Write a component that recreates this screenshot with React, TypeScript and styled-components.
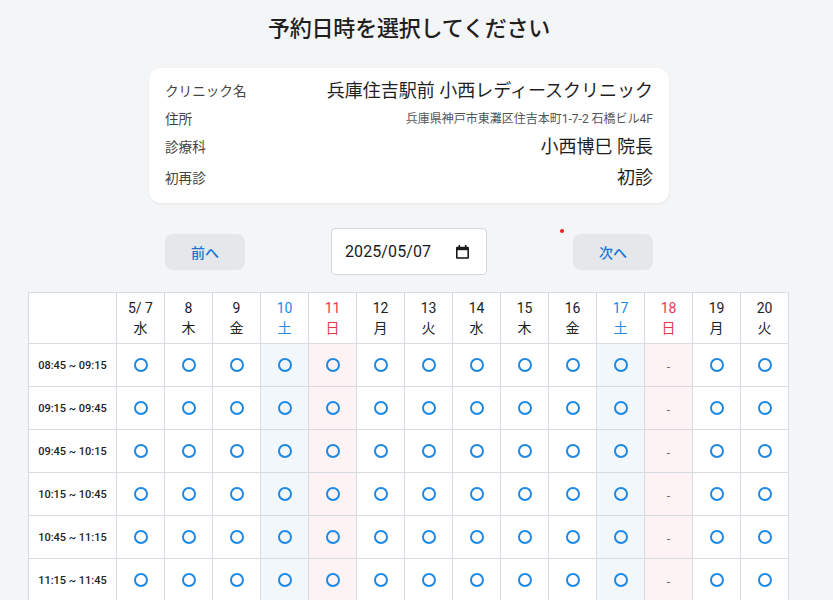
import React from "react";
import styled, { createGlobalStyle, css } from "styled-components";

const GlobalStyle = createGlobalStyle`
  html, body { margin: 0; padding: 0; background: #f4f5f7; }
  body {
    font-family: Roboto, "Noto Sans CJK JP", sans-serif;
    color: #222;
  }
  * { box-sizing: border-box; }
`;

const Page = styled.div`
  width: 818px;
  padding-top: 13px;
  display: flex;
  flex-direction: column;
  align-items: center;
`;

const Title = styled.h1`
  margin: 0;
  font-size: 22px;
  line-height: 32px;
  font-weight: 500;
  color: #1f1f1f;
  letter-spacing: -0.2px;
`;

const Card = styled.div`
  margin-top: 23px;
  width: 520px;
  background: #fff;
  border-radius: 12px;
  box-shadow: 0 1px 3px rgba(0, 0, 0, 0.06);
  padding: 10px 16px 12px 16px;
  display: flex;
  flex-direction: column;
  gap: 5px;
`;

const InfoRow = styled.div`
  display: flex;
  justify-content: space-between;
  align-items: center;
`;

const Label = styled.span`
  font-size: 13.6px;
  line-height: 20px;
  color: #444;
`;

const Value = styled.span<{ $small?: boolean }>`
  font-size: ${(p) => (p.$small ? "12px" : "18px")};
  line-height: ${(p) => (p.$small ? "17px" : "26px")};
  color: ${(p) => (p.$small ? "#555" : "#1f1f1f")};
  text-align: right;
`;

const Controls = styled.div`
  margin-top: 25px;
  width: 520px;
  padding: 0 16px;
  display: flex;
  justify-content: space-between;
  align-items: center;
`;

const NavButton = styled.button`
  display: block;
  width: 80px;
  height: 36px;
  border: none;
  border-radius: 8px;
  background: #e5e8eb;
  color: #1976d2;
  font-family: Roboto, "Noto Sans CJK JP", sans-serif;
  font-size: 14px;
  font-weight: 500;
  cursor: pointer;
`;

const NextWrap = styled.div`
  position: relative;
`;

const Dot = styled.span`
  position: absolute;
  left: -13px;
  top: -5px;
  width: 4px;
  height: 4px;
  border-radius: 50%;
  background: #ee2020;
`;

const DateBox = styled.label`
  width: 156px;
  height: 47px;
  background: #fff;
  border: 1px solid #cfd6dc;
  border-radius: 4px;
  display: flex;
  align-items: center;
  justify-content: space-between;
  padding: 0 17px 0 13px;
  font-size: 16px;
  color: #1a1a1a;
`;

const DateText = styled.span`
  letter-spacing: 0.1px;
`;

const TableWrap = styled.div`
  margin-top: 17px;
  margin-right: 2px;
  width: 760px;
`;

const Table = styled.table`
  width: 760px;
  border-collapse: collapse;
  table-layout: fixed;
  background: #fff;
`;

type DayKind = "weekday" | "sat" | "sun";

const kindColor = (k: DayKind) =>
  k === "sat" ? "#1e88e5" : k === "sun" ? "#e53950" : "#222";

const kindBg = (k: DayKind) =>
  k === "sat" ? "#f2f7fb" : k === "sun" ? "#fdf3f4" : "#fff";

const HeadCell = styled.th<{ $kind: DayKind }>`
  border: 1px solid #d6dce2;
  height: 51px;
  padding: 0;
  font-weight: 400;
  font-size: 14px;
  line-height: 20px;
  color: ${(p) => kindColor(p.$kind)};
  background: #fff;
  text-align: center;
`;

const CornerCell = styled.th`
  border: 1px solid #d6dce2;
  padding: 0;
  background: #fff;
`;

const DayCol = styled.col`
  width: 48px;
`;

const TimeCol = styled.col`
  width: 88px;
`;

const TimeCell = styled.td`
  border: 1px solid #d6dce2;
  height: 43px;
  padding: 0;
  text-align: center;
  font-size: 11px;
  font-weight: 500;
  color: #222;
  white-space: nowrap;
`;

const SlotCell = styled.td<{ $kind: DayKind }>`
  border: 1px solid #d6dce2;
  height: 43px;
  padding: 0;
  text-align: center;
  vertical-align: middle;
  background: ${(p) => kindBg(p.$kind)};
`;

const Circle = styled.span`
  display: block;
  margin: 0 auto;
  width: 14px;
  height: 14px;
  border: 2px solid #1e88e5;
  border-radius: 50%;
`;

const Dash = styled.span`
  font-size: 12px;
  color: #666;
`;

const Line = styled.div<{ $cjk?: boolean }>`
  ${(p) =>
    p.$cjk &&
    css`
      font-size: 14px;
    `}
`;

const CalendarIcon = () => (
  <svg width="13" height="14" viewBox="0 0 13 14" aria-hidden>
    <rect x="2.5" y="0" width="1.6" height="2.5" fill="#1a1a1a" />
    <rect x="8.9" y="0" width="1.6" height="2.5" fill="#1a1a1a" />
    <rect x="0" y="1.8" width="13" height="12" rx="1" fill="#1a1a1a" />
    <rect x="1.6" y="5.2" width="9.8" height="7" fill="#fff" />
  </svg>
);

const weekdays = ["日", "月", "火", "水", "木", "金", "土"];

const days = Array.from({ length: 14 }, (_, i) => {
  const d = 7 + i;
  const wd = (3 + i) % 7;
  const kind: DayKind = wd === 6 ? "sat" : wd === 0 ? "sun" : "weekday";
  return { d, label: i === 0 ? "5/ 7" : String(d), wd: weekdays[wd], kind };
});

const times = [
  "08:45 ~ 09:15",
  "09:15 ~ 09:45",
  "09:45 ~ 10:15",
  "10:15 ~ 10:45",
  "10:45 ~ 11:15",
  "11:15 ~ 11:45",
];

const closed = new Set([18]);

export default function App() {
  return (
    <>
      <GlobalStyle />
      <Page>
        <Title>予約日時を選択してください</Title>
        <Card>
          <InfoRow>
            <Label>クリニック名</Label>
            <Value>兵庫住吉駅前 小西レディースクリニック</Value>
          </InfoRow>
          <InfoRow>
            <Label>住所</Label>
            <Value $small>兵庫県神戸市東灘区住吉本町1-7-2 石橋ビル4F</Value>
          </InfoRow>
          <InfoRow>
            <Label>診療科</Label>
            <Value>小西博巳 院長</Value>
          </InfoRow>
          <InfoRow>
            <Label>初再診</Label>
            <Value>初診</Value>
          </InfoRow>
        </Card>
        <Controls>
          <NavButton>前へ</NavButton>
          <DateBox>
            <DateText>2025/05/07</DateText>
            <CalendarIcon />
          </DateBox>
          <NextWrap>
            <Dot />
            <NavButton>次へ</NavButton>
          </NextWrap>
        </Controls>
        <TableWrap>
          <Table>
            <colgroup>
              <TimeCol />
              {days.map((d) => (
                <DayCol key={d.d} />
              ))}
            </colgroup>
            <thead>
              <tr>
                <CornerCell />
                {days.map((d) => (
                  <HeadCell key={d.d} $kind={d.kind}>
                    <Line>{d.label}</Line>
                    <Line $cjk>{d.wd}</Line>
                  </HeadCell>
                ))}
              </tr>
            </thead>
            <tbody>
              {times.map((t) => (
                <tr key={t}>
                  <TimeCell>{t}</TimeCell>
                  {days.map((d) => (
                    <SlotCell key={d.d} $kind={d.kind}>
                      {closed.has(d.d) ? <Dash>-</Dash> : <Circle />}
                    </SlotCell>
                  ))}
                </tr>
              ))}
            </tbody>
          </Table>
        </TableWrap>
      </Page>
    </>
  );
}
